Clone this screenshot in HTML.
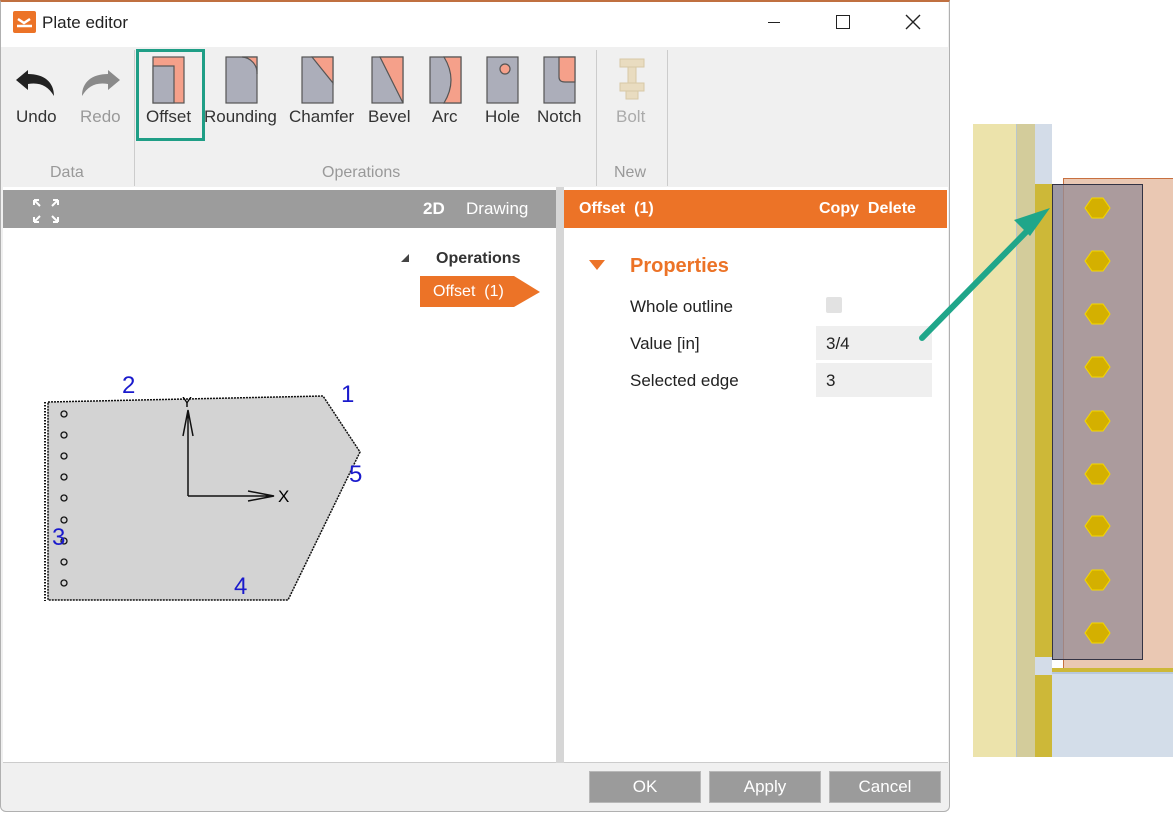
<!DOCTYPE html>
<html><head><style>
*{margin:0;padding:0;box-sizing:border-box}
body{width:1173px;height:813px;background:#fff;position:relative;overflow:hidden;font-family:"Liberation Sans",sans-serif}
.a{position:absolute}
.lbl{position:absolute;font-size:17px;color:#333;text-align:center;white-space:nowrap}
.grp{position:absolute;font-size:16px;color:#999;top:164px}
.btn{position:absolute;top:771px;width:112px;height:32px;background:#9b9b9b;border:1px solid #b8b8b8;color:#fff;font-size:17px;text-align:center;line-height:30px}
</style></head><body>
<div class="a" style="left:0;top:0;width:950px;height:812px;background:#f0f0f0;border:1px solid #b0b0b0;border-top:2px solid #c07040;border-radius:0 0 6px 6px"></div>
<div class="a" style="left:1px;top:2px;width:947px;height:45px;background:#fff"></div>
<div class="a" style="left:13px;top:11px;width:23px;height:22px;background:#ec7327;border-radius:2px"></div>
<svg class="a" style="left:13px;top:11px" width="23" height="22"><path d="M5 8l6 4 6-4M4 15h15" stroke="#fff" stroke-width="2.5" fill="none"/></svg>
<div class="a" style="left:42px;top:13px;font-size:17px;color:#222">Plate editor</div>
<div class="a" style="left:768px;top:22px;width:12px;height:1px;background:#222"></div>
<div class="a" style="left:836px;top:15px;width:14px;height:14px;border:1.5px solid #222"></div>
<svg class="a" style="left:905px;top:14px" width="16" height="16"><path d="M1 1l14 14M15 1L1 15" stroke="#222" stroke-width="1.4"/></svg>
<div class="a" style="left:134px;top:50px;width:1px;height:136px;background:#ccc"></div>
<div class="a" style="left:596px;top:50px;width:1px;height:136px;background:#ccc"></div>
<div class="a" style="left:667px;top:50px;width:1px;height:136px;background:#ccc"></div>
<svg class="a" style="left:14px;top:66px" width="46" height="32"><path d="M14 4L2 14l12 10v-6c12-2 20 2 26 12 0-14-10-22-26-22z" fill="#222"/></svg>
<svg class="a" style="left:76px;top:66px" width="46" height="32"><path d="M32 4l12 10-12 10v-6c-12-2-20 2-26 12 0-14 10-22 26-22z" fill="#8a8a8a"/></svg>
<div class="lbl" style="left:16px;top:107px">Undo</div>
<div class="lbl" style="left:80px;top:107px;color:#999">Redo</div>
<div class="grp" style="left:50px">Data</div>
<div class="grp" style="left:322px">Operations</div>
<div class="grp" style="left:614px">New</div>
<div class="a" style="left:136px;top:49px;width:69px;height:92px;border:3px solid #1f9e86"></div>
<svg class="a" style="left:150px;top:55px" width="440" height="50">
<g stroke="#555" stroke-width="1.2">
<rect x="3" y="2" width="31" height="46" fill="#f5a08a"/><rect x="3" y="11" width="21" height="37" fill="#acaeba"/>
<rect x="76" y="2" width="31" height="46" fill="#acaeba"/><path d="M92 2a16 16 0 0 1 15 17V2z" fill="#f5a08a"/>
<rect x="152" y="2" width="31" height="46" fill="#acaeba"/><path d="M162 2h21v26z" fill="#f5a08a"/>
<rect x="222" y="2" width="31" height="46" fill="#acaeba"/><path d="M230 2h23v46z" fill="#f5a08a"/>
<rect x="280" y="2" width="31" height="46" fill="#acaeba"/><path d="M294 2q14 23 0 46h17V2z" fill="#f5a08a"/>
<rect x="337" y="2" width="31" height="46" fill="#acaeba"/><circle cx="355" cy="14" r="5" fill="#f5a08a"/>
<rect x="394" y="2" width="31" height="46" fill="#acaeba"/><path d="M409 2v20q0 5 6 5h10V2z" fill="#f5a08a"/>
</g></svg>
<svg class="a" style="left:617px;top:57px" width="30" height="46"><g fill="#e9dcc0" stroke="#d8c9a6"><rect x="3" y="2" width="24" height="8"/><rect x="11" y="10" width="8" height="26"/><rect x="3" y="26" width="24" height="8"/><rect x="9" y="34" width="12" height="8"/></g></svg>
<div class="lbl" style="left:146px;top:107px">Offset</div>
<div class="lbl" style="left:204px;top:107px">Rounding</div>
<div class="lbl" style="left:289px;top:107px">Chamfer</div>
<div class="lbl" style="left:368px;top:107px">Bevel</div>
<div class="lbl" style="left:432px;top:107px">Arc</div>
<div class="lbl" style="left:485px;top:107px">Hole</div>
<div class="lbl" style="left:537px;top:107px">Notch</div>
<div class="lbl" style="left:616px;top:107px;color:#aaa">Bolt</div>
<div class="a" style="left:3px;top:187px;width:945px;height:576px;background:#fff;border-bottom:1px solid #ccc"></div>
<div class="a" style="left:556px;top:187px;width:8px;height:576px;background:#d6d6d6"></div>
<div class="a" style="left:3px;top:190px;width:553px;height:38px;background:#9c9c9c"></div>
<svg class="a" style="left:30px;top:196px" width="34" height="30"><g stroke="#fff" stroke-width="2" fill="none"><path d="M4 4l6 6M4 4h5M4 4v5M28 4l-6 6M28 4h-5M28 4v5M4 26l6-6M4 26h5M4 26v-5M28 26l-6-6M28 26h-5M28 26v-5"/></g></svg>
<div class="a" style="left:423px;top:199px;color:#fff;font-size:17px;font-weight:bold">2D</div>
<div class="a" style="left:466px;top:199px;color:#fff;font-size:17px">Drawing</div>
<div class="a" style="left:564px;top:190px;width:383px;height:38px;background:#ec7327"></div>
<div class="a" style="left:579px;top:200px;color:#fff;font-size:16px;font-weight:bold">Offset&nbsp; (1)</div>
<div class="a" style="left:819px;top:200px;color:#fff;font-size:16px;font-weight:bold">Copy&nbsp;&nbsp;Delete</div>
<div class="a" style="left:401px;top:254px;width:0;height:0;border-left:8px solid transparent;border-bottom:8px solid #444"></div>
<div class="a" style="left:436px;top:250px;font-size:16px;font-weight:bold;color:#333">Operations</div>
<svg class="a" style="left:420px;top:276px" width="122" height="32"><path d="M0 0h94l26 16-26 15H0z" fill="#ec7327"/></svg>
<div class="a" style="left:433px;top:283px;font-size:16px;color:#fff">Offset&nbsp; (1)</div>
<svg class="a" style="left:0;top:370px" width="560" height="240">
<path d="M48 32L323 26L360 82L288 230H48z" fill="#d3d3d3" stroke="#111" stroke-width="1.5" stroke-dasharray="2 1"/>
<path d="M45 32V231" stroke="#111" stroke-width="2" stroke-dasharray="1.5 1.5"/>
<g fill="none" stroke="#111" stroke-width="1.3"><circle cx="64" cy="44" r="3"/><circle cx="64" cy="65" r="3"/><circle cx="64" cy="86" r="3"/><circle cx="64" cy="107" r="3"/><circle cx="64" cy="128" r="3"/><circle cx="64" cy="150" r="3"/><circle cx="64" cy="171" r="3"/><circle cx="64" cy="192" r="3"/><circle cx="64" cy="213" r="3"/></g>
<path d="M188 126V40M183 66l5-26 5 26M188 126h86M248 121l26 5-26 5" stroke="#111" stroke-width="1.5" fill="none"/>
<text x="278" y="132" font-size="17" font-family="Liberation Sans">X</text>
<text x="182" y="37" font-size="15" font-family="Liberation Sans">Y</text>
<g fill="#1a1acc" font-size="24" font-family="Liberation Sans"><text x="122" y="23">2</text><text x="341" y="32">1</text><text x="349" y="112">5</text><text x="52" y="175">3</text><text x="234" y="224">4</text></g>
</svg>
<div class="a" style="left:589px;top:260px;width:0;height:0;border-left:8px solid transparent;border-right:8px solid transparent;border-top:10px solid #ec7327"></div>
<div class="a" style="left:630px;top:255px;font-size:20px;font-weight:bold;color:#ec7327">Properties</div>
<div class="a" style="left:630px;top:297px;font-size:17px;color:#222">Whole outline</div>
<div class="a" style="left:826px;top:297px;width:16px;height:16px;background:#e2e2e2;border-radius:2px"></div>
<div class="a" style="left:630px;top:334px;font-size:17px;color:#222">Value [in]</div>
<div class="a" style="left:630px;top:371px;font-size:17px;color:#222">Selected edge</div>
<div class="a" style="left:816px;top:326px;width:116px;height:34px;background:#efefef;font-size:17px;padding:8px 0 0 10px;color:#222">3/4</div>
<div class="a" style="left:816px;top:363px;width:116px;height:34px;background:#efefef;font-size:17px;padding:8px 0 0 10px;color:#222">3</div>
<div class="btn" style="left:589px">OK</div>
<div class="btn" style="left:709px">Apply</div>
<div class="btn" style="left:829px">Cancel</div>
<div class="a" style="left:973px;top:124px;width:43px;height:633px;background:#ece3ab"></div>
<div class="a" style="left:1016px;top:124px;width:19px;height:633px;background:#d3cc9b;border-left:1px solid #b9c6cc"></div>
<div class="a" style="left:1035px;top:124px;width:17px;height:633px;background:#cdb838"></div>
<div class="a" style="left:1035px;top:124px;width:17px;height:60px;background:#d3dce8"></div>
<div class="a" style="left:1035px;top:657px;width:17px;height:18px;background:#d3dce8"></div>
<div class="a" style="left:1052px;top:670px;width:121px;height:87px;background:#d3dde9"></div>
<div class="a" style="left:1052px;top:668px;width:121px;height:6px;background:#cdb838;border-bottom:2px solid #b8c8dc"></div>
<div class="a" style="left:1063px;top:178px;width:110px;height:490px;background:#eac8b3;border-left:1px solid #c87040;border-top:1px solid #c87040"></div>
<div class="a" style="left:1052px;top:184px;width:11px;height:476px;background:#b7bfd0"></div>
<div class="a" style="left:1052px;top:184px;width:91px;height:476px;background:rgba(150,140,150,.75);border:1px solid #334"></div>
<svg class="a" style="left:1084px;top:195px" width="32" height="460"><g fill="#d4b000" stroke="#f5d800">
<path id="h" d="M8 3h11l7 10-7 10H8L1 13z"/><use href="#h" y="53"/><use href="#h" y="106"/><use href="#h" y="159"/><use href="#h" y="213"/><use href="#h" y="266"/><use href="#h" y="318"/><use href="#h" y="372"/><use href="#h" y="425"/></g></svg>
<svg class="a" style="left:910px;top:200px" width="150" height="150"><path d="M12 138L120 28" stroke="#1fa68a" stroke-width="6" stroke-linecap="round"/><path d="M140 8L104 20l16 16z" fill="#1fa68a"/></svg>
</body></html>
